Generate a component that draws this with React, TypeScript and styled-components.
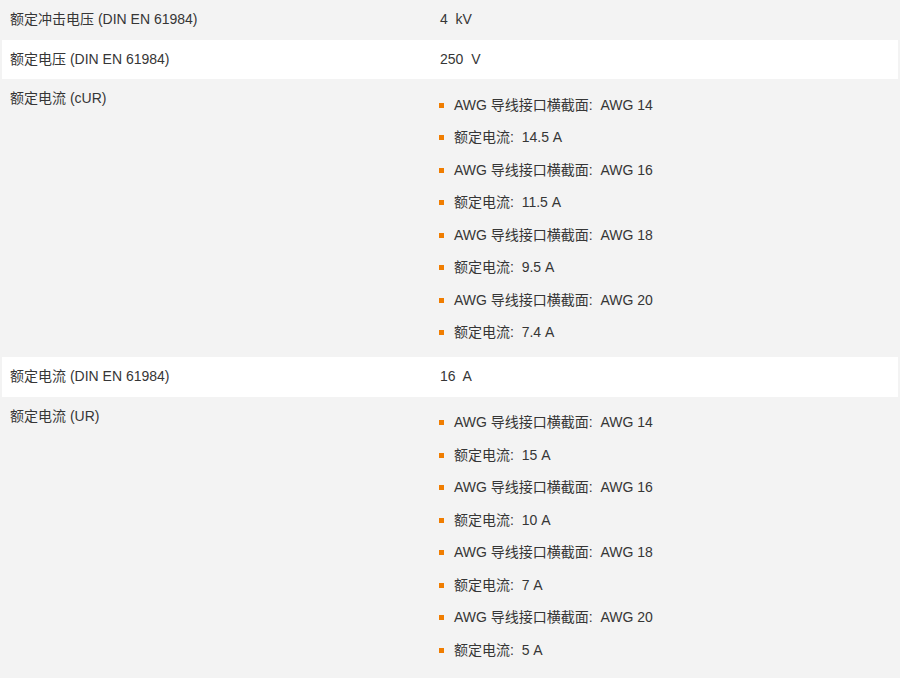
import React from 'react';
import styled, { createGlobalStyle } from 'styled-components';

interface Spec {
    label: string;
    value?: string;
    items?: string[];
}

const awgList = (pairs: [string, string][]) =>
    pairs.flatMap(([awg, amp]) => [
        `AWG 导线接口横截面:\u00a0 AWG ${awg}`,
        `额定电流:\u00a0 ${amp}`,
    ]);

const specs: Spec[] = [
    { label: '额定冲击电压 (DIN EN 61984)', value: '4\u00a0 kV' },
    { label: '额定电压 (DIN EN 61984)', value: '250\u00a0 V' },
    {
        label: '额定电流 (cUR)',
        items: awgList([['14', '14.5 A'], ['16', '11.5 A'], ['18', '9.5 A'], ['20', '7.4 A']]),
    },
    { label: '额定电流 (DIN EN 61984)', value: '16\u00a0 A' },
    {
        label: '额定电流 (UR)',
        items: awgList([['14', '15 A'], ['16', '10 A'], ['18', '7 A'], ['20', '5 A']]),
    },
];

export default function App() {
    return <>
        <GlobalStyle />
        <Table>
            {specs.map((spec, i) =>
                <Row key={spec.label} striped={i % 2 === 1}>
                    <Label>{spec.label}</Label>
                    {spec.items
                        ? <ValueCell list>
                            <List>
                                {spec.items.map((item, j) => <Item key={j}>{item}</Item>)}
                            </List>
                        </ValueCell>
                        : <ValueCell>{spec.value}</ValueCell>}
                </Row>
            )}
        </Table>
    </>
}

const GlobalStyle = createGlobalStyle`
body {
margin: 0;
background: #f3f3f3;
font-family: "Liberation Sans", Arial, "Noto Sans CJK SC", sans-serif;
font-size: 14px;
color: #363636;
}
`

const Table = styled.div`
display: flex;
flex-direction: column;
padding: 0 2px;
`

const Row = styled.div<{ striped: boolean }>`
display: grid;
grid-template-columns: 430px 1fr;
background: ${p => p.striped ? '#fff' : 'transparent'};
line-height: 17.5px;
`

const Label = styled.div`
padding: 11px 8px;
`

const ValueCell = styled.div<{ list?: boolean }>`
padding: ${p => p.list ? '10px 8px 8px' : '11px 8px'};
white-space: pre;
`

const List = styled.ul`
list-style: none;
margin: 0;
padding: 0;
`

const Item = styled.li`
display: flex;
align-items: center;
padding: 7.5px 0;

&::before {
content: '';
width: 5px;
height: 5px;
margin: 0 10px 0 -1px;
background: #f07d00;
flex-shrink: 0;
}
`
